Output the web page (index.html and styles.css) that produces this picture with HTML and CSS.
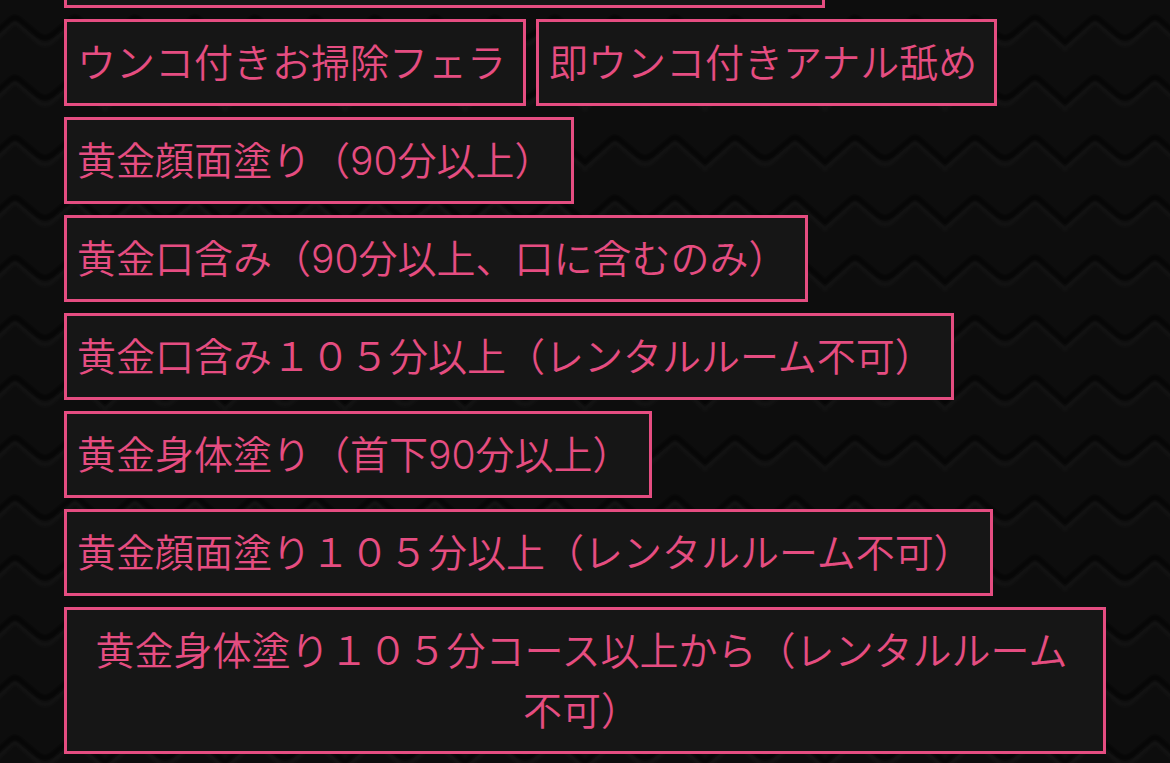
FILE: index.html
```
<!DOCTYPE html>
<html lang="ja">
<head>
    <meta charset="UTF-8">
    <meta name="viewport" content="width=device-width, initial-scale=1.0">
    <title>オプション</title>
    <link rel="stylesheet" href="styles.css">
</head>
<body>

    <ul class="option-list">
        <li class="option option-cut"></li>
        <li class="option">ウンコ付きお掃除フェラ</li>
        <li class="option">即ウンコ付きアナル舐め</li>
        <li class="option">黄金顔面塗り（90分以上）</li>
        <li class="option">黄金口含み（90分以上、口に含むのみ）</li>
        <li class="option">黄金口含み１０５分以上（レンタルルーム不可）</li>
        <li class="option">黄金身体塗り（首下90分以上）</li>
        <li class="option">黄金顔面塗り１０５分以上（レンタルルーム不可）</li>
        <li class="option">黄金身体塗り１０５分コース以上から（レンタルルーム不可）</li>
    </ul>

</body>
</html>
```
FILE: styles.css
```
body {
    margin: 0;
    background-color: #0d0d0d;
    /* zigzag pattern */
    background-image: url("data:image/svg+xml,%3Csvg xmlns='http://www.w3.org/2000/svg' xmlns:xlink='http://www.w3.org/1999/xlink' width='120' height='60'%3E%3Cdefs%3E%3Cpath id='a' d='M-15 49L10 26Q15 21 20 26L38 42Q45 47 52 42L70 26Q75 21 80 26L105 49L130 26'/%3E%3Cpath id='b' d='M-15 42L10 20Q15 15 20 20L38 35Q45 40 52 35L70 20Q75 15 80 20L105 42L130 20'/%3E%3C/defs%3E%3Cg fill='none' stroke-linejoin='round'%3E%3Cg stroke='%23151515' stroke-opacity='.35'%3E%3Cuse xlink:href='%23a' stroke-width='6'/%3E%3Cuse xlink:href='%23a' stroke-width='3'/%3E%3C/g%3E%3Cg stroke='%23000' stroke-opacity='.25'%3E%3Cuse xlink:href='%23b' stroke-width='7'/%3E%3Cuse xlink:href='%23b' stroke-width='4'/%3E%3C/g%3E%3C/g%3E%3C/svg%3E");
    background-size: 120px 60px;
    color: #e54d81;
    font-family: Inter, "Noto Sans CJK JP", sans-serif;
    font-size: 39px;
    font-weight: 350;
    line-height: 60px;
}

.option-list {
    display: flex;
    flex-wrap: wrap;
    gap: 11px 10px;
    margin: 0;
    padding: 0 64px;
    list-style: none;
}

.option {
    box-sizing: border-box;
    padding: 11px 17px 10px 10px;
    border: 3px solid #e54d81;
    background-color: #161616;
    text-align: center;
}

.option-cut {
    width: 73%;
    height: 8px;
    padding: 0;
    border-top: none;
}
```
